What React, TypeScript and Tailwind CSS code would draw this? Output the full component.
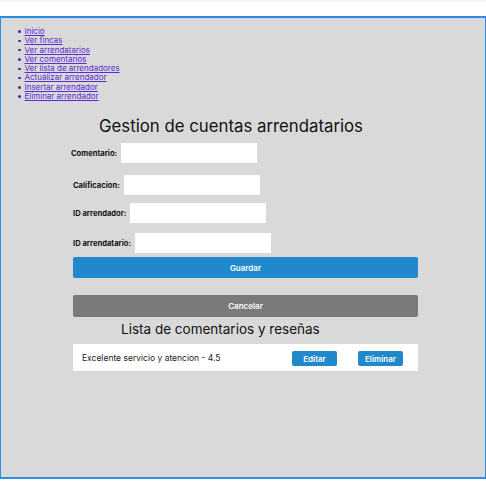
import React from 'react';

const links = [
  'Inicio',
  'Ver fincas',
  'Ver arrendatarios',
  'Ver comentarios',
  'Ver lista de arrendadores',
  'Actualizar arrendador',
  'Insertar arrendador',
  'Eliminar arrendador',
];

const fields = [
  { label: 'Comentario:', ml: 'ml-[70px]', mt: 'mt-[6px]' },
  { label: 'Calificacion:', ml: 'ml-[72px]', mt: 'mt-[12px]' },
  { label: 'ID arrendador:', ml: 'ml-[72px]', mt: 'mt-[8px]' },
  { label: 'ID arrendatario:', ml: 'ml-[72px]', mt: 'mt-[10px]' },
];

const App: React.FC = () => {
  return (
    <div className="w-[486px] h-[497px] bg-white font-['Inter','Liberation_Sans',sans-serif]">
      <div className="h-[2px] bg-[#f3f3f3]" />
      <div className="h-[14px] bg-white" />
      <div className="w-[486px] h-[463px] border-x-[1.5px] border-t-2 border-b-2 border-[#2b8ee6] bg-[#d9d9d9] flex flex-col">
        <ul className="mt-[9px] ml-[17px] text-[8px] leading-[9.3px] text-[#5b2bd6]">
          {links.map((l) => (
            <li key={l} className="flex items-center">
              <span className="w-[2.5px] h-[2.5px] rounded-full bg-[#3b2bb0] mr-[4px]" />
              <a href="#" className="underline">{l}</a>
            </li>
          ))}
        </ul>

        <h1 className="mt-[14px] ml-[98px] text-[16.8px] leading-[22px] text-[#111]">
          Gestion de cuentas arrendatarios
        </h1>

        {fields.map((f) => (
          <div key={f.label} className={`${f.ml} ${f.mt} flex items-center gap-[4px]`}>
            <label className="text-[7.6px] font-bold text-[#111]">{f.label}</label>
            <input className="w-[136px] h-[20px] bg-white outline-none" />
          </div>
        ))}

        <button className="mt-[4px] ml-[72px] w-[345px] h-[21px] rounded-[2px] bg-[#2189cb] text-white text-[8px] font-semibold">
          Guardar
        </button>
        <button className="mt-[17px] ml-[72px] w-[345px] h-[22px] rounded-[2px] bg-[#7a7a7a] text-white text-[8px] font-semibold">
          Cancelar
        </button>

        <h2 className="mt-[2px] ml-[120px] text-[13.5px] leading-[20px] text-[#111]">
          Lista de comentarios y reseñas
        </h2>

        <div className="mt-[5px] ml-[72px] w-[345px] h-[27px] bg-white flex items-center">
          <span className="ml-[9px] w-[210px] text-[8.5px] text-[#222]">Excelente servicio y atencion - 4.5</span>
          <button className="w-[45px] h-[15px] mt-[2px] rounded-[2px] bg-[#2189cb] text-white text-[8px] font-semibold">
            Editar
          </button>
          <button className="ml-[21px] w-[45px] h-[15px] mt-[2px] rounded-[2px] bg-[#2189cb] text-white text-[8px] font-semibold">
            Eliminar
          </button>
        </div>
      </div>
    </div>
  );
};

export default App;
